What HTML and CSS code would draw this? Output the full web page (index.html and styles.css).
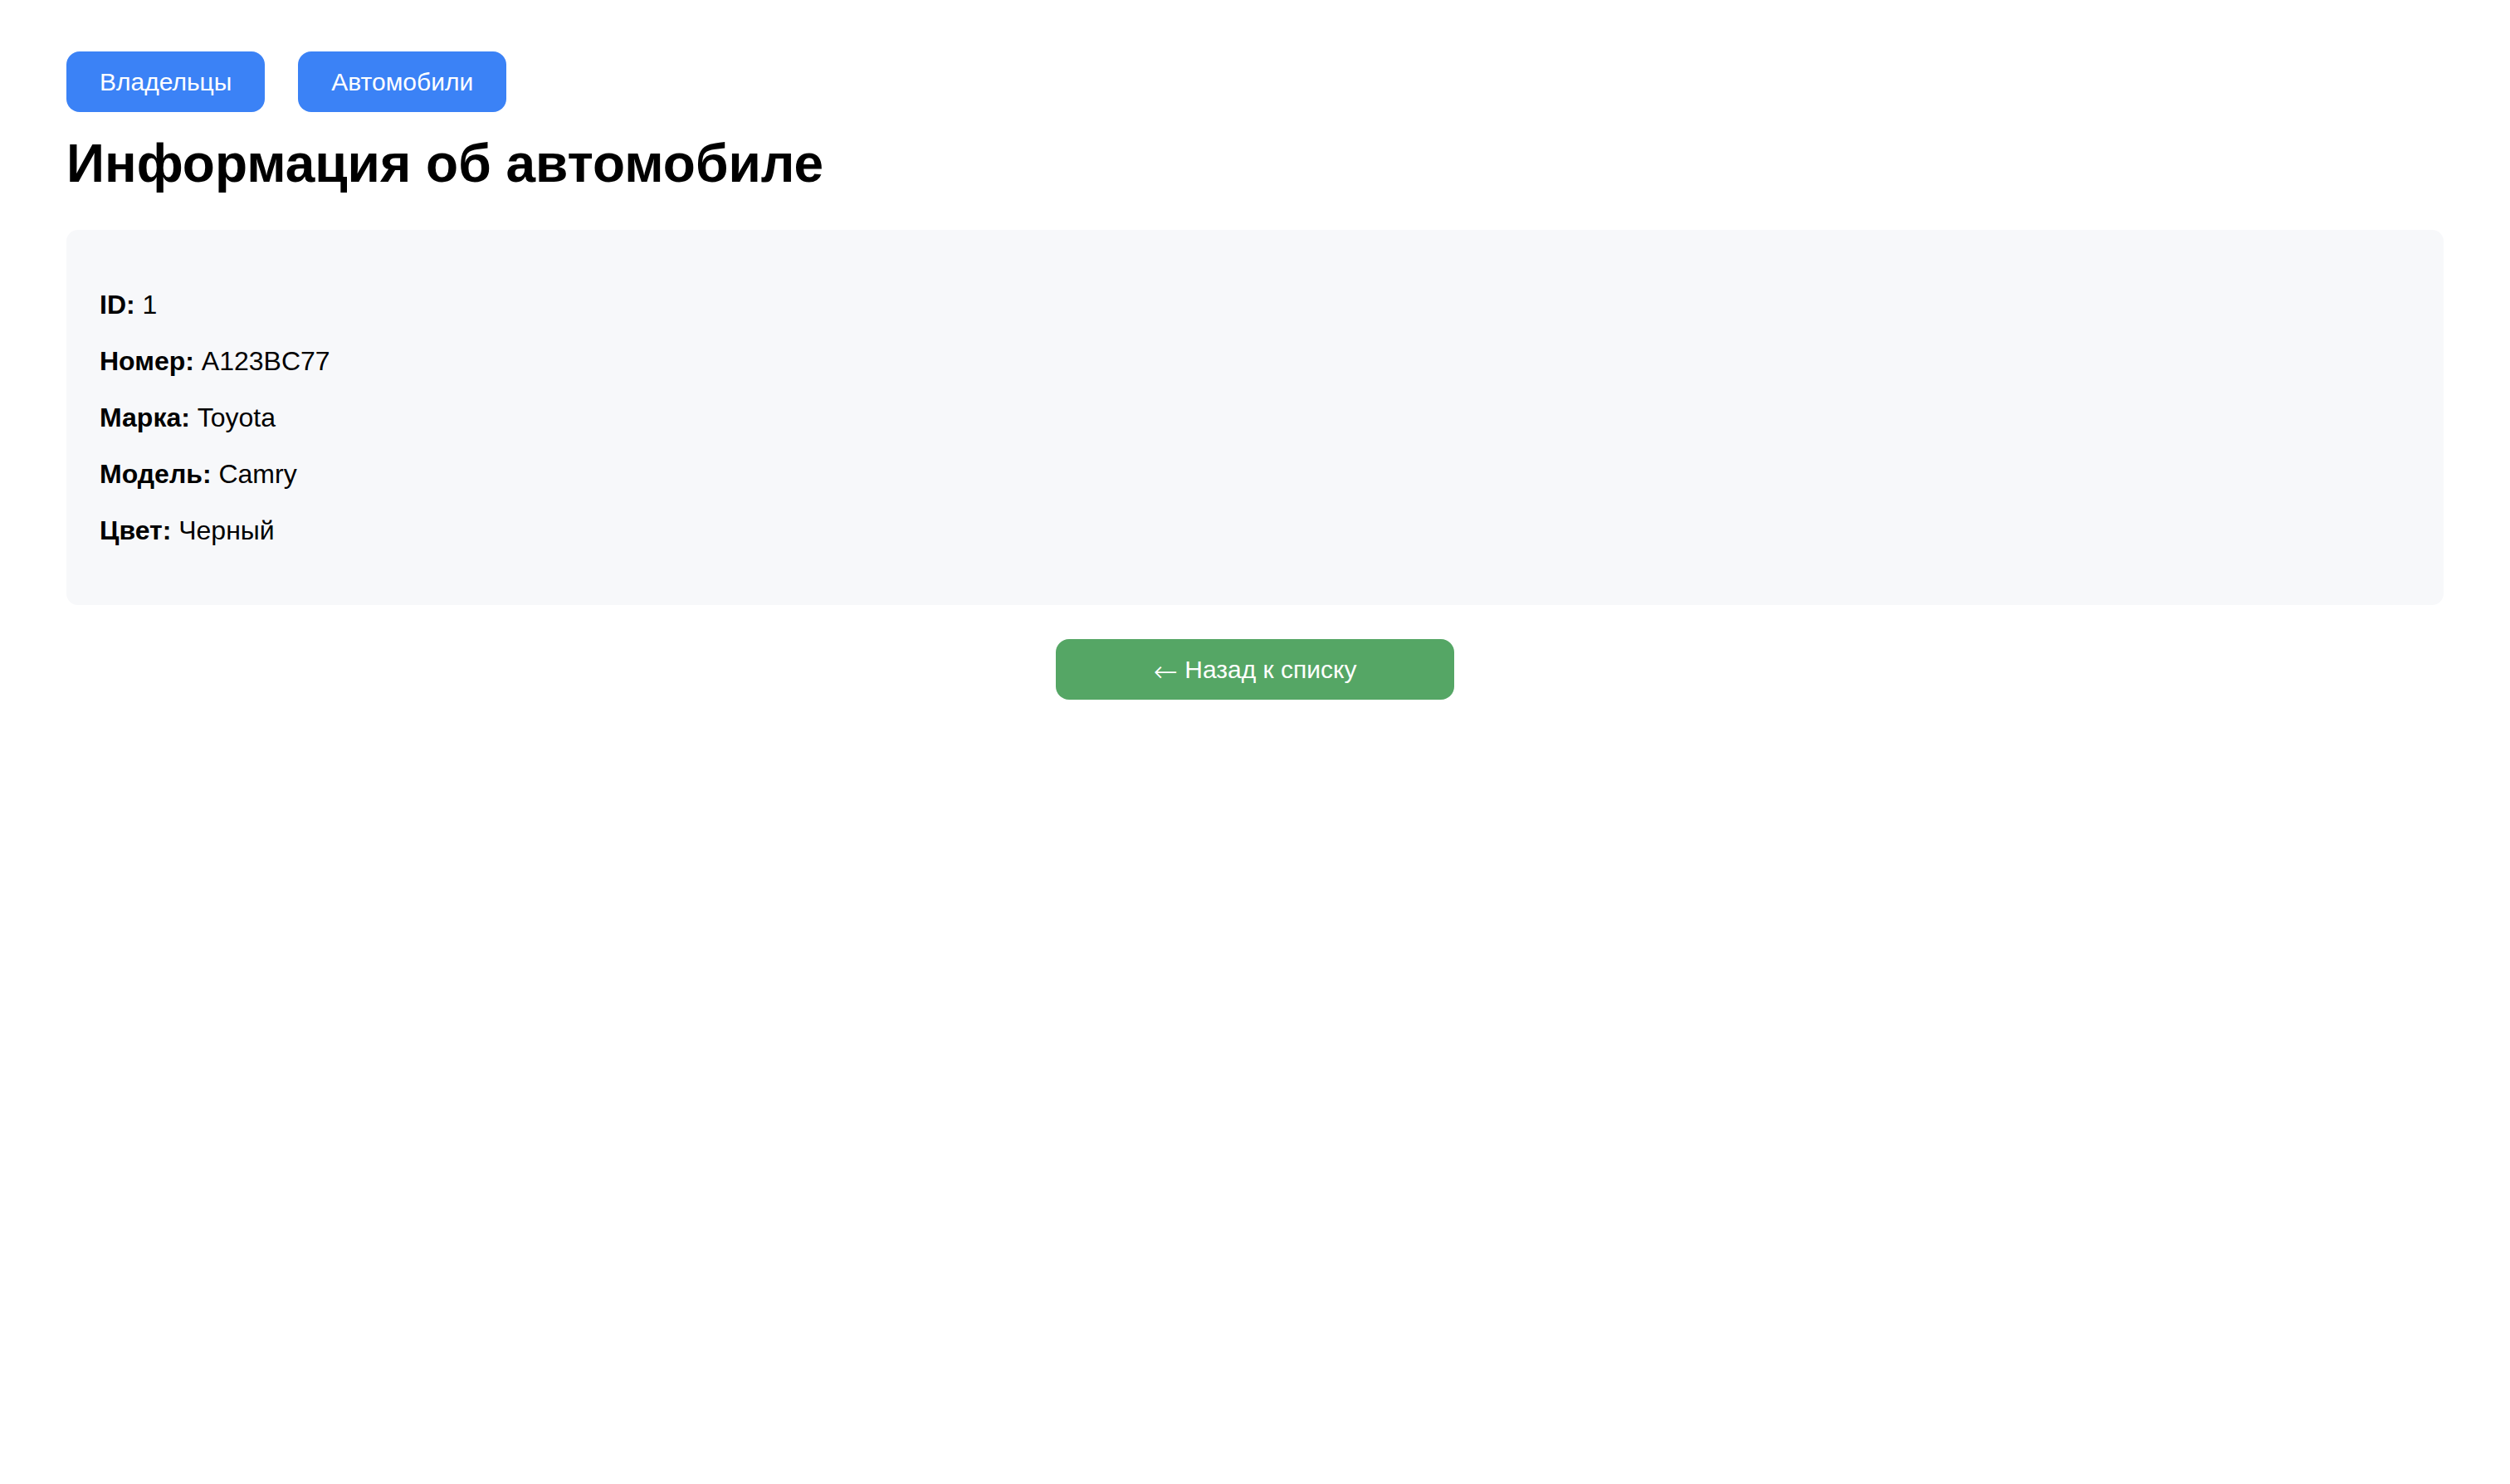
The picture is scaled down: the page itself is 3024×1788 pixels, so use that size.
FILE: index.html
```html
<!DOCTYPE html>
<html lang="ru">
<head>
<meta charset="utf-8">
<title>Информация об автомобиле</title>
<link rel="stylesheet" href="styles.css">
</head>
<body>
<div class="page">
  <nav class="nav">
    <a class="nav-btn" href="#">Владельцы</a>
    <a class="nav-btn" href="#">Автомобили</a>
  </nav>
  <h1 class="title">Информация об автомобиле</h1>
  <section class="card">
    <p class="row"><strong>ID:</strong> 1</p>
    <p class="row"><strong>Номер:</strong> A123BC77</p>
    <p class="row"><strong>Марка:</strong> Toyota</p>
    <p class="row"><strong>Модель:</strong> Camry</p>
    <p class="row"><strong>Цвет:</strong> Черный</p>
  </section>
  <a class="back-btn" href="#"><span class="arrow">←</span> Назад к списку</a>
</div>
</body>
</html>
```

FILE: styles.css
```css
html, body {
  margin: 0;
  padding: 0;
  background: #ffffff;
}

body {
  font-family: "Liberation Sans", Arial, Helvetica, sans-serif;
  color: #000000;
}

.page {
  padding: 62px 80px 80px 80px;
}

.nav {
  display: flex;
  gap: 40px;
  margin-bottom: 25px;
}

.nav-btn {
  display: block;
  background: #3b82f6;
  color: #ffffff;
  text-decoration: none;
  font-size: 30px;
  line-height: 33px;
  padding: 20px 40px;
  border-radius: 16px;
}

.title {
  font-size: 64px;
  font-weight: 700;
  line-height: 74px;
  margin: 0 0 43px 0;
}

.card {
  background: #f7f8fa;
  border-radius: 14px;
  padding: 40px;
}

.row {
  font-size: 32px;
  line-height: 36px;
  margin: 32px 0;
}

.row strong {
  font-weight: 700;
}

.back-btn {
  display: block;
  width: 480px;
  height: 73px;
  box-sizing: border-box;
  margin: 41px auto 0 auto;
  background: #55a665;
  color: #ffffff;
  text-decoration: none;
  text-align: center;
  font-size: 30px;
  line-height: 33px;
  padding: 20px 0;
  border-radius: 16px;
}

.arrow {
  font-family: "DejaVu Sans", sans-serif;
  font-size: 35px;
  line-height: 0;
  font-weight: 200;
  vertical-align: -4px;
}
```
